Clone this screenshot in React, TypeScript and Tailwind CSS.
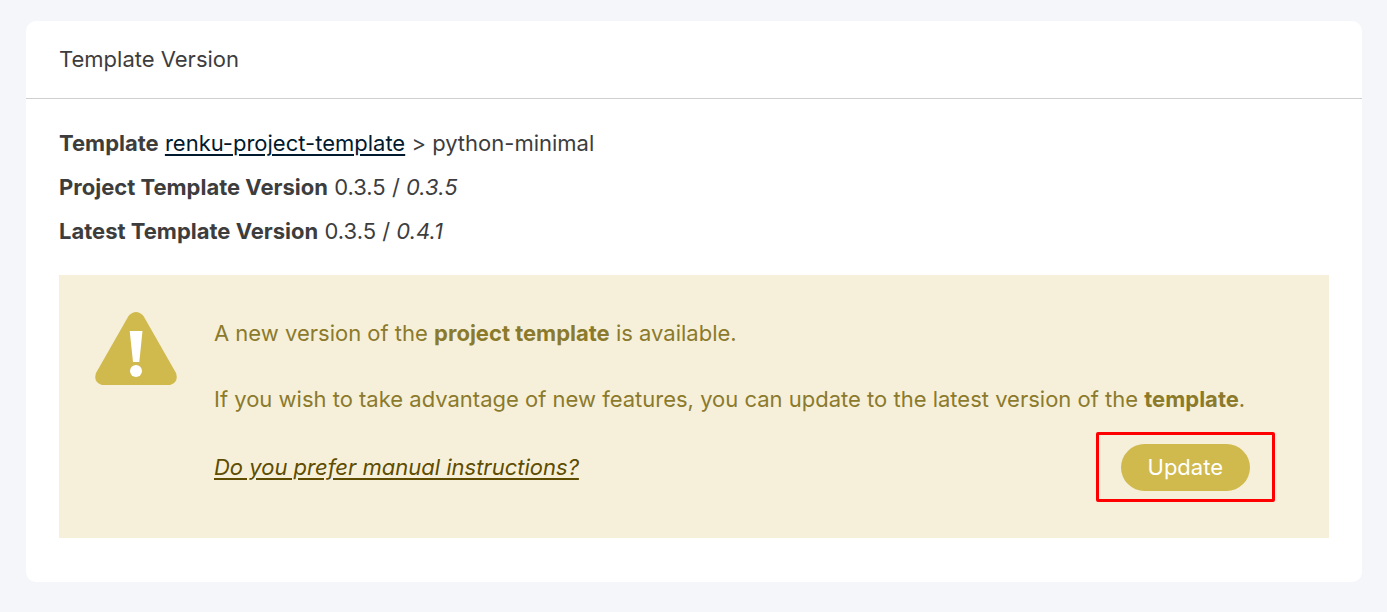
export default function App() {
  return (
    <main className="min-h-screen bg-[#f4f6fa] pt-[21px] pr-[25px] pb-[30px] pl-[26px] font-['Inter',sans-serif] text-[22px] leading-[33px] font-normal text-[#3d3d3d]">
      <section className="rounded-[10px] bg-white pb-11">
        <header className="border-b border-[#cfcfcf] px-[33px] py-[22px]">
          <h1>Template Version</h1>
        </header>
        <div className="px-[33px] pt-7">
          <p className="mb-[11px]">
            <strong className="font-bold">Template</strong>{" "}
            <a href="#template" className="text-[#01192d] underline decoration-2 underline-offset-3">renku-project-template</a> &gt; python-minimal
          </p>
          <p className="mb-[11px]">
            <strong className="font-bold">Project Template Version</strong> 0.3.5 / <em>0.3.5</em>
          </p>
          <p className="mb-[27px]">
            <strong className="font-bold">Latest Template Version</strong> 0.3.5 / <em>0.4.1</em>
          </p>
          <div role="alert" className="flex gap-[37px] bg-[#f6f0da] pt-9 pr-[54px] pb-9 pl-9 text-[#8b7a2c]">
            <svg viewBox="0 0 82 74" className="h-[74px] w-[82px] shrink-0" aria-hidden="true">
              <path d="M33.5 5Q41 -3 48.5 5L81 62Q84 71 75 74H7Q-2 71 1 62Z" fill="#d0ba4d" />
              <path d="M34.7 20H47.5L44.3 51H38Z" fill="#fff" />
              <circle cx="41" cy="60" r="6" fill="#fff" />
            </svg>
            <div className="min-w-0 grow pt-[6px]">
              <p>A new version of the <strong className="font-bold">project template</strong> is available.</p>
              <p className="mt-[33px]">If you wish to take advantage of new features, you can update to the latest version of the <strong className="font-bold">template</strong>.</p>
              <div className="mt-4 flex items-center justify-between">
                <a href="#manual" className="text-[#5e4c00] italic underline decoration-2 underline-offset-3">Do you prefer manual instructions?</a>
                <div className="rounded-[2px] border-[3px] border-[#ff0000] px-[22px] pt-[9px] pb-2">
                  <button type="button" className="block h-[47px] rounded-full bg-[#d0ba4d] px-[27px] text-white">Update</button>
                </div>
              </div>
            </div>
          </div>
        </div>
      </section>
    </main>
  );
}
